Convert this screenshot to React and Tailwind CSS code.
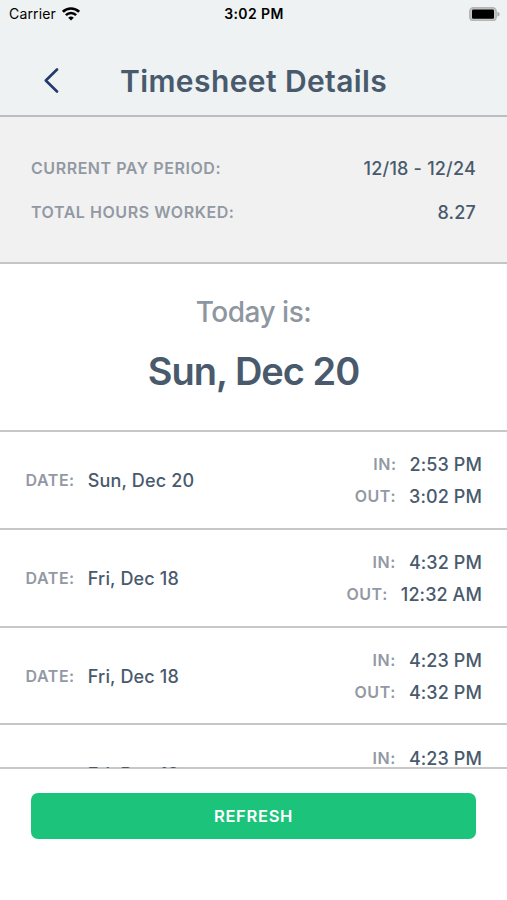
import clsx from 'clsx'

const shifts = [
  { id: 1, date: 'Sun, Dec 20', timeIn: '2:53 PM', timeOut: '3:02 PM' },
  { id: 2, date: 'Fri, Dec 18', timeIn: '4:32 PM', timeOut: '12:32 AM' },
  { id: 3, date: 'Fri, Dec 18', timeIn: '4:23 PM', timeOut: '4:32 PM' },
  { id: 4, date: 'Fri, Dec 18', timeIn: '4:23 PM', timeOut: '4:23 PM' },
]

function StatusBar() {
  return (
    <div className="grid grid-cols-3 items-center h-[27px] pl-[9px] pr-[7px] text-[14px] text-black">
      <div className="flex items-center gap-[6px]">
        <span className="tracking-[0.15px]">Carrier</span>
        <svg width="18" height="14" viewBox="0 0 18 14" fill="none" stroke="black" strokeWidth="2.6">
          <path d="M0.9 4.8a11.5 11.5 0 0 1 16.2 0" />
          <path d="M3.9 8.1a7.2 7.2 0 0 1 10.2 0" />
          <path d="M9 13.6L6.2 10.8a4 4 0 0 1 5.6 0z" fill="black" stroke="none" />
        </svg>
      </div>
      <span className="-ml-[1px] text-center font-semibold tracking-[0.4px] whitespace-nowrap">3:02 PM</span>
      <svg className="justify-self-end" width="31" height="14" viewBox="0 0 31 14">
        <rect x="0.8" y="0.8" width="26.4" height="12.9" rx="3.6" fill="#c4c6c6" stroke="#b4b6b6" strokeWidth="1.5" />
        <path d="M28.4 4.8c1.6.5 2.2 1.3 2.2 2.4s-.6 1.9-2.2 2.4z" fill="#a9acac" />
        <rect x="3" y="2.6" width="22" height="9.2" rx="1.2" fill="black" />
      </svg>
    </div>
  )
}

function Label({ children, className }) {
  return (
    <span className={clsx('text-[16px] font-semibold tracking-[0.55px] text-[#9299a3]', className)}>
      {children}
    </span>
  )
}

function SummaryRow({ label, value }) {
  return (
    <div className="flex items-center justify-between h-[44px]">
      <Label>{label}</Label>
      <span className="text-[18px] font-[550] tracking-[0.2px]">{value}</span>
    </div>
  )
}

function TimeRow({ label, value }) {
  return (
    <div className="flex items-center h-8">
      <Label className="-mt-[1px]">{label}</Label>
      <span className="ml-[13px] text-[18px] font-[550] tracking-[0.1px]">{value}</span>
    </div>
  )
}

function ShiftRow({ shift }) {
  return (
    <div className="flex items-center justify-between h-[97.8px] shrink-0 pt-[1.8px] pl-[25.5px] pr-[25px] border-b-2 border-[#c6c7c8]">
      <div className="flex items-center">
        <Label className="-mt-[1px]">DATE:</Label>
        <span className="ml-[13px] text-[18px] font-[550] tracking-[0.15px]">{shift.date}</span>
      </div>
      <div className="flex flex-col items-end">
        <TimeRow label="IN:" value={shift.timeIn} />
        <TimeRow label="OUT:" value={shift.timeOut} />
      </div>
    </div>
  )
}

export default function App() {
  return (
    <div className="flex flex-col w-full h-[900px] overflow-hidden bg-white text-[#485a6c] font-['Inter',sans-serif]">
      <header className="h-[117px] shrink-0 bg-[#eef2f3] border-b-2 border-[#bbbebf]">
        <StatusBar />
        <div className="flex items-center h-[107px] pl-[43.5px]">
          <svg width="15" height="25" viewBox="0 0 15 25" fill="none" stroke="#25396f" strokeWidth="2.6" strokeLinecap="round" strokeLinejoin="round">
            <path d="M13 1.5L1.8 12.5L13 23.5" />
          </svg>
          <h1 className="ml-[61.5px] pt-[1px] text-[30px] font-semibold tracking-[0.4px] whitespace-nowrap">Timesheet Details</h1>
        </div>
      </header>

      <section className="h-[147px] shrink-0 px-[31px] pt-[29px] bg-[#f1f1f1] border-b-2 border-[#c4c5c6]">
        <SummaryRow label="CURRENT PAY PERIOD:" value="12/18 - 12/24" />
        <SummaryRow label="TOTAL HOURS WORKED:" value="8.27" />
      </section>

      <section className="flex flex-col items-center h-[168px] shrink-0 pt-[28px] border-b-2 border-[#c6c7c8]">
        <p className="text-[28px] leading-[40px] font-medium tracking-[-0.5px] text-[#8e96a0]">Today is:</p>
        <p className="mt-[14px] text-[38px] leading-[50px] font-semibold tracking-[-1px]">Sun, Dec 20</p>
      </section>

      {/* the list runs 1px over the footer border */}
      <div className="z-10 flex flex-col h-[336px] -mb-[1px] shrink-0 overflow-hidden">
        {shifts.map(shift => (
          <ShiftRow key={shift.id} shift={shift} />
        ))}
      </div>

      <footer className="grow px-[31px] pt-[24px] border-t-2 border-[#c6c7c8]">
        <button className="w-full h-[46px] rounded-[7px] bg-[#1bc47a] text-[16.5px] font-semibold tracking-[0.7px] text-white">
          REFRESH
        </button>
      </footer>
    </div>
  )
}
